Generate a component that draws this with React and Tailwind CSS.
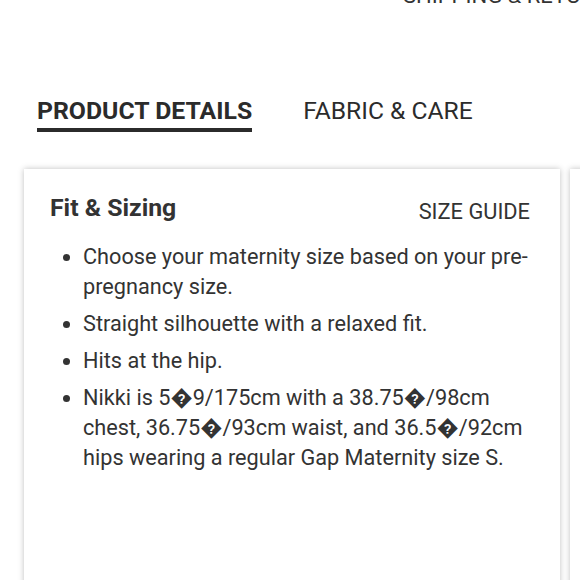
import React from "react";

export default function App() {
  const items = [
    "Choose your maternity size based on your pre-pregnancy size.",
    "Straight silhouette with a relaxed fit.",
    "Hits at the hip.",
    "Nikki is 5\uFFFD9/175cm with a 38.75\uFFFD/98cm chest, 36.75\uFFFD/93cm waist, and 36.5\uFFFD/92cm hips wearing a regular Gap Maternity size S.",
  ];
  return (
    <div
      className="w-[580px] h-[580px] overflow-hidden bg-white text-[#333333] relative"
      style={{ fontFamily: "Roboto, 'Liberation Sans', sans-serif" }}
    >
      <div className="absolute left-[403px] top-[-17px] whitespace-nowrap text-[22px] leading-[26px] text-[#333]">
        SHIPPING &amp; RETURNS
      </div>
      <div className="pt-[96px] pl-[37px] flex gap-[51px] items-start">
        <div className="flex flex-col">
          <span className="text-[24.8px] leading-[30px] font-bold text-[#2b2b2b]">PRODUCT DETAILS</span>
          <span className="mt-[2px] h-[4px] bg-[#2b2b2b]"></span>
        </div>
        <span className="text-[24.6px] leading-[30px] text-[#2b2b2b]">FABRIC &amp; CARE</span>
      </div>
      <div className="flex gap-[10px] pl-[24px] mt-[37px]">
        <div className="w-[536px] shrink-0 h-[480px] bg-white shadow-[0_0_6px_rgba(0,0,0,0.25)] px-[26px] pt-[24px]">
          <div className="flex justify-between items-start">
            <span className="text-[24.8px] leading-[30px] font-bold">Fit &amp; Sizing</span>
            <span className="text-[21.8px] leading-[30px] mr-[4px] mt-[4px]">SIZE GUIDE</span>
          </div>
          <ul className="mt-[15px] pl-[33px] list-disc text-[21.7px] leading-[30px] flex flex-col gap-[7px]">
            {items.map((t, i) => (
              <li key={i} className="pr-[6px]">{t}</li>
            ))}
          </ul>
        </div>
        <div className="w-[300px] shrink-0 h-[480px] bg-white shadow-[0_0_6px_rgba(0,0,0,0.25)]"></div>
      </div>
    </div>
  );
}
